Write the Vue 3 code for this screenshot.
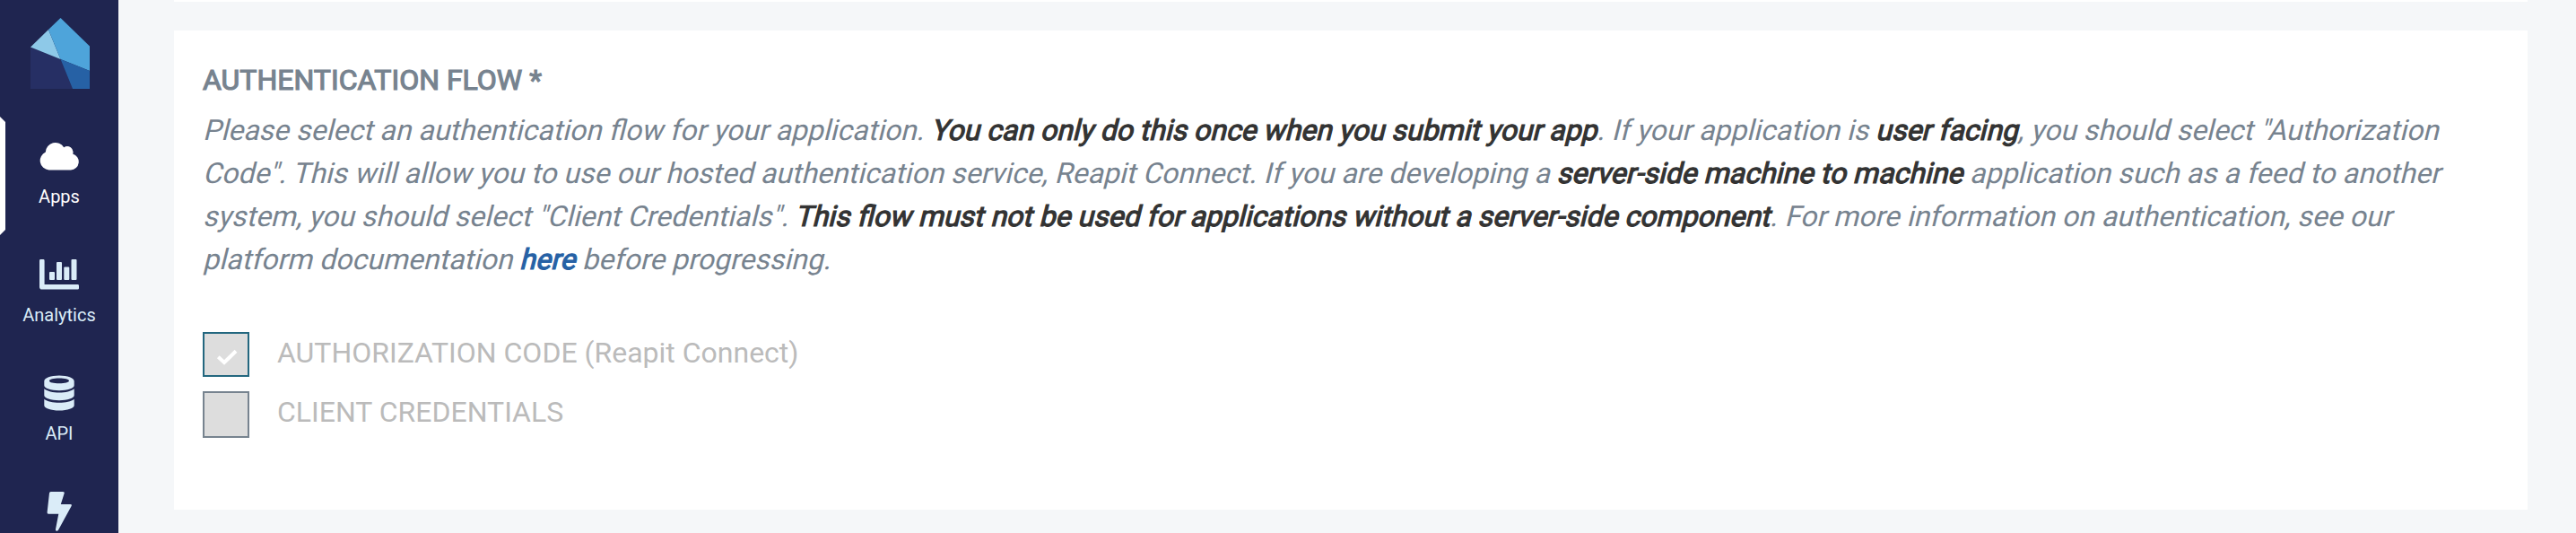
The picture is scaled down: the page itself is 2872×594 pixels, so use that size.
<script setup>
const items = [
  { id: 'apps', label: 'Apps', active: true },
  { id: 'analytics', label: 'Analytics' },
  { id: 'api', label: 'API' },
  { id: 'webhooks', label: '' },
]
const options = [
  { label: 'AUTHORIZATION CODE (Reapit Connect)', checked: true },
  { label: 'CLIENT CREDENTIALS', checked: false },
]
</script>

<template>
  <div class="page">
    <nav class="sidebar">
      <svg class="logo" width="66" height="80" viewBox="0 0 66 80">
        <path fill="#262f64" d="M0 32.5 33.5 46 47 79H0z" />
        <path fill="#8ec9e8" d="M0 32.5 20 13 33.5 46z" />
        <path fill="#4ea4da" d="M20 13 33.5 0 66 31.5V59L33.5 46z" />
        <path fill="#2661a5" d="M33.5 46 66 59V79H47z" />
      </svg>
      <div v-for="item in items" :key="item.id" class="item" :class="{ active: item.active }">
        <svg v-if="item.active" class="marker" width="6" height="132" viewBox="0 0 6 132">
          <path fill="#fff" d="M0 0 6 6V126L0 132z" />
        </svg>
        <svg class="icon" width="44" height="44" viewBox="0 0 44 44" fill="currentColor">
          <path
            v-if="item.id === 'apps'"
            d="M10.500 37.500A10.500 10.500 0 0 1 6.800 17.500A11 11 0 0 1 27.200 12.300A6.500 6.500 0 0 1 37.200 19.500A9.200 9.200 0 0 1 35 37.500z"
          />
          <g v-else-if="item.id === 'analytics'">
            <path d="M1.400 5H4.200Q5.600 5 5.600 6.400V33H42.600Q44 33 44 34.400V37.200Q44 38.600 42.600 38.600H2.800Q0 38.600 0 35.800V6.400Q0 5 1.400 5z" />
            <rect x="11" y="19" width="6" height="9" rx="1" />
            <rect x="19" y="8" width="6" height="20" rx="1" />
            <rect x="27.300" y="13.500" width="6" height="14.500" rx="1" />
            <rect x="35.500" y="5" width="6" height="23" rx="1" />
          </g>
          <g v-else-if="item.id === 'api'">
            <path
              fill-rule="evenodd"
              d="M22 2.500C31.200 2.500 38.700 5.300 38.700 8.800V13.500C38.700 16.600 31.200 19.200 22 19.200S5.300 16.600 5.300 13.500V8.800C5.300 5.300 12.800 2.500 22 2.500zM22 5.500C15.700 5.500 11 6.700 11 8.400S15.700 11.200 22 11.200 33 10 33 8.400 28.300 5.500 22 5.500z"
            />
            <path d="M5.300 17.300C8.500 20 15 21.600 22 21.600S35.500 20 38.700 17.300V24.500C38.700 27.600 31.200 30.200 22 30.200S5.300 27.600 5.300 24.500z" />
            <path d="M5.300 28.700C8.500 31.400 15 32.800 22 32.800S35.500 31.400 38.700 28.700V35.700C38.700 38.800 31.200 41.500 22 41.500S5.300 38.800 5.300 35.700z" />
          </g>
          <path
            v-else
            d="M12.600 0H26Q28.300 0 27.600 2L23.800 14H34.500Q36.600 14 35.600 16L21 42.800Q20 44 18.900 43.700 17.600 43.300 18 41.700L21.300 24.700H10Q8.400 24.700 8.600 23L11 1.600Q11.200 0 12.600 0z"
          />
        </svg>
        <span class="label">{{ item.label }}</span>
      </div>
    </nav>
    <main class="content">
      <section class="card previous"></section>
      <section class="card">
        <h2 class="title">AUTHENTICATION FLOW *</h2>
        <p class="description">
          <span class="line">Please select an authentication flow for your application. <b>You can only do this once when you submit your app</b>. If your application is <b>user facing</b>, you should select "Authorization</span>
          <span class="line">Code". This will allow you to use our hosted authentication service, Reapit Connect. If you are developing a <b>server-side machine to machine</b> application such as a feed to another</span>
          <span class="line">system, you should select "Client Credentials". <b>This flow must not be used for applications without a server-side component</b>. For more information on authentication, see our</span>
          <span class="line">platform documentation <a class="link">here</a> before progressing.</span>
        </p>
        <div class="options">
          <label v-for="o in options" :key="o.label" class="option">
            <span class="box" :class="{ checked: o.checked }">
              <svg v-if="o.checked" class="tick" width="24" height="18" viewBox="0 0 24 18">
                <path d="M2.300 8.700 9 15 22 2.300" fill="none" stroke="#fff" stroke-width="4" />
              </svg>
            </span>
            <span class="text">{{ o.label }}</span>
          </label>
        </div>
      </section>
    </main>
  </div>
</template>

<style>
body {
  margin: 0;
  overflow: hidden;
}
</style>

<style scoped>
.page {
  display: flex;
  height: 594px;
  overflow: hidden;
  background: #f5f7f9;
  font-family: Roboto, 'Liberation Sans', sans-serif;
}
.sidebar {
  box-sizing: border-box;
  display: flex;
  flex: none;
  flex-direction: column;
  width: 132px;
  padding-top: 20px;
  background: #1f2550;
  color: #daecf8;
}
.logo {
  flex: none;
  margin: 0 0 30px 34px;
}
.item {
  position: relative;
  box-sizing: border-box;
  display: flex;
  flex: none;
  flex-direction: column;
  align-items: center;
  height: 132px;
  padding-top: 22px;
}
.item.active {
  color: #fff;
}
.marker {
  position: absolute;
  top: 0;
  left: 0;
}
.icon {
  flex: none;
}
.label {
  margin-top: 11px;
  font-size: 20px;
  line-height: 24px;
}
.content {
  flex: 1;
  padding: 0 54px 0 62px;
}
.card {
  box-sizing: border-box;
  height: 534px;
  padding: 31px 32px;
  background: #fff;
}
.previous {
  height: 2px;
  margin-bottom: 32px;
  padding: 0;
}
.title {
  margin: 0;
  color: #77838f;
  font-size: 32px;
  font-weight: 400;
  line-height: 48px;
  -webkit-text-stroke: 1.2px currentColor;
}
.description {
  margin: 8px 0 0;
  color: #77838f;
  font-size: 32px;
  line-height: 48px;
  white-space: nowrap;
  word-spacing: -0.06px;
}
/* Slants the upright face around its baseline */
.line {
  display: block;
  transform: skewX(-14deg);
  transform-origin: 0 35px;
}
.description b,
.link {
  color: #333;
  font-weight: 400;
  -webkit-text-stroke: 1.2px currentColor;
}
.description .link {
  color: #2661a5;
}
.options {
  display: flex;
  flex-direction: column;
  gap: 14px;
  margin-top: 57px;
}
.option {
  display: flex;
  align-items: flex-start;
  gap: 31px;
  height: 52px;
  color: #bbb;
  font-size: 32px;
}
.text {
  line-height: 46px;
}
.box {
  box-sizing: border-box;
  width: 52px;
  height: 52px;
  border: 2px solid #77838f;
  background: #ddd;
}
.box.checked {
  height: 50px;
  border-color: #23677f;
}
.tick {
  display: block;
  margin: 17px 0 0 13px;
}
</style>
